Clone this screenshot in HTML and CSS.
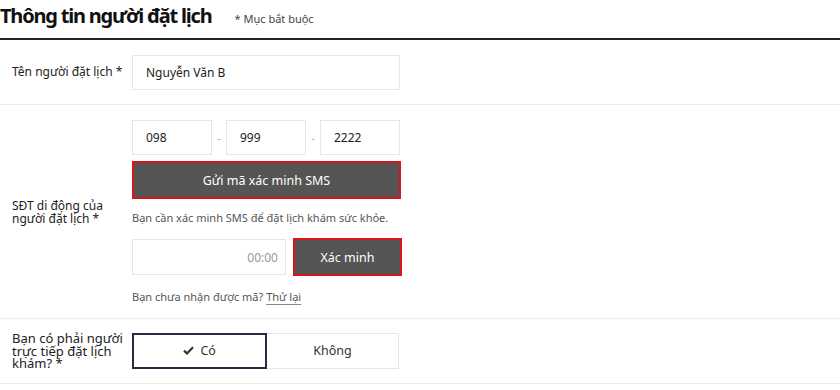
FILE: index.html
```html
<!DOCTYPE html>
<html lang="vi">
<head>
    <meta charset="UTF-8">
    <meta name="viewport" content="width=device-width, initial-scale=1.0">
    <title>Thông tin người đặt lịch</title>
    <link rel="stylesheet" href="styles.css">
</head>
<body>

<div class="header">
    <h2>Thông tin người đặt lịch</h2>
    <span class="required-note">* Mục bắt buộc</span>
</div>

<div class="form">

    <div class="row">
        <div class="label">Tên người đặt lịch *</div>
        <div class="field">
            <input class="text-input" type="text" value="Nguyễn Văn B">
        </div>
    </div>

    <div class="row phone-row">
        <div class="label">SĐT di động của người đặt lịch *</div>
        <div class="field">
            <div class="phone">
                <input class="text-input phone-part" type="text" value="098">
                <span class="dash">-</span>
                <input class="text-input phone-part" type="text" value="999">
                <span class="dash">-</span>
                <input class="text-input phone-part" type="text" value="2222">
            </div>
            <button class="btn btn-sms">Gửi mã xác minh SMS</button>
            <p class="hint">Bạn cần xác minh SMS để đặt lịch khám sức khỏe.</p>
            <div class="verify">
                <input class="text-input code-input" type="text" placeholder="00:00">
                <button class="btn btn-verify">Xác minh</button>
            </div>
            <p class="hint retry">Bạn chưa nhận được mã? <a href="#">Thử lại</a></p>
        </div>
    </div>

    <div class="row self-row">
        <div class="label">Bạn có phải người trực tiếp đặt lịch khám? *</div>
        <div class="field">
            <div class="toggle">
                <button class="option selected">
                    <svg width="11" height="9" viewBox="0 0 11 9"><path d="M1 4.6 L4 7.4 L10 1.2" fill="none" stroke="#333" stroke-width="2.2"/></svg>
                    Có
                </button>
                <button class="option">Không</button>
            </div>
        </div>
    </div>

</div>

</body>
</html>
```

FILE: styles.css
```css
body {
    font-family: "Noto Sans", "Open Sans", Arial, sans-serif;
    margin: 0;
    color: #222;
    background: #fff;
}
.header {
    display: flex;
    align-items: baseline;
    height: 40px;
    border-bottom: 2px solid #222;
    box-sizing: border-box;
    padding-top: 1px;
}
.header h2 {
    margin: 0;
    font-size: 20px;
    font-weight: bold;
    letter-spacing: -1.2px;
    line-height: 30px;
    color: #111;
}
.required-note {
    margin-left: 23px;
    font-size: 11px;
    color: #444;
}
.row {
    display: flex;
    align-items: center;
    padding: 15px 0 14px;
    border-bottom: 1px solid #ececec;
}
.phone-row {
    padding: 15px 0 13px;
}
.self-row {
    padding: 13px 0 13px;
}
.label {
    width: 132px;
    padding-left: 12px;
    box-sizing: border-box;
    flex-shrink: 0;
    font-size: 12px;
    line-height: 12.5px;
    color: #222;
}
.self-row .label {
    font-size: 13px;
}
.field {
    width: 268px;
}
.text-input {
    width: 100%;
    height: 35px;
    box-sizing: border-box;
    border: 1px solid #e6e6e6;
    padding: 0 13px;
    font-family: inherit;
    font-size: 12px;
    color: #222;
    outline: none;
    display: block;
}
.phone {
    display: flex;
    align-items: center;
    width: 269px;
}
.phone .phone-part {
    width: 80px;
}
.dash {
    width: 14px;
    text-align: center;
    font-size: 11px;
    color: #aaa;
}
.btn {
    font-family: inherit;
    background-color: #555;
    color: #fff;
    border: 2px solid #d9141b;
    font-size: 12.5px;
    cursor: pointer;
    box-sizing: border-box;
}
.btn-sms {
    display: block;
    width: 269px;
    height: 38px;
    margin-top: 6px;
}
.hint {
    margin: 11px 0 0;
    font-size: 11px;
    line-height: 16px;
    color: #555;
}
.verify {
    display: flex;
    align-items: center;
    margin-top: 12px;
    width: 270px;
}
.code-input {
    width: 154px;
    height: 36px;
    text-align: right;
    padding-right: 7px;
}
.code-input::placeholder {
    color: #999;
}
.btn-verify {
    width: 109px;
    height: 38px;
    margin-left: 7px;
}
.retry {
    margin-top: 13px;
}
.retry a {
    color: #555;
    text-decoration: underline;
    text-underline-offset: 3px;
    text-decoration-color: #888;
}
.toggle {
    display: flex;
    width: 267px;
}
.option {
    font-family: inherit;
    flex: 1;
    height: 36px;
    background: #fff;
    border: 1px solid #e6e6e6;
    border-left: none;
    font-size: 12.5px;
    color: #333;
    cursor: pointer;
    box-sizing: border-box;
}
.option.selected {
    border: 2px solid #2c2846;
}
.option svg {
    margin-right: 3px;
}
```
